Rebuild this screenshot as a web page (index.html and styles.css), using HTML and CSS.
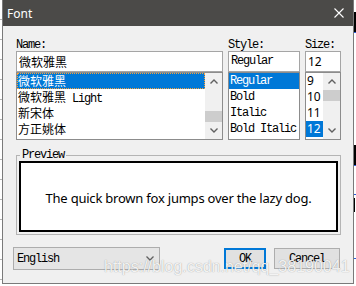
FILE: index.html
```html
<!DOCTYPE html>
<html>
<head>
<meta charset="utf-8">
<title>Font</title>
<link rel="stylesheet" href="styles.css">
</head>
<body>
  <div class="strip-left"></div>
  <div class="dialog">
    <div class="titlebar">
      <span class="title">Font</span>
      <svg class="close" width="10" height="10" viewBox="0 0 10 10"><path d="M0.5 0.5 L9.5 9.5 M9.5 0.5 L0.5 9.5" stroke="#fff" stroke-width="1.1" fill="none"/></svg>
    </div>
    <div class="content">
      <div class="pickers">
        <div class="lbl m">Name:</div>
        <div class="lbl m">Style:</div>
        <div class="lbl m">Size:</div>

        <div class="edit cjk">微软雅黑</div>
        <div class="edit m">Regular</div>
        <div class="edit sans">12</div>

        <div class="list">
          <div class="items">
            <div class="item sel focus cjk">微软雅黑</div>
            <div class="item mixed"><span class="cjk">微软雅黑</span><span class="m lite">Light</span></div>
            <div class="item cjk">新宋体</div>
            <div class="item cjk">方正姚体</div>
          </div>
          <div class="sbar">
            <div class="sbtn"><svg width="8" height="5" viewBox="0 0 8 5"><polyline points="0.5,4.5 4,1 7.5,4.5" fill="none" stroke="#606060" stroke-width="1.4"/></svg></div>
            <div class="track end"><div class="thumb"></div></div>
            <div class="sbtn"><svg width="8" height="5" viewBox="0 0 8 5"><polyline points="0.5,0.5 4,4 7.5,0.5" fill="none" stroke="#606060" stroke-width="1.4"/></svg></div>
          </div>
        </div>

        <div class="list">
          <div class="items m">
            <div class="item sel">Regular</div>
            <div class="item">Bold</div>
            <div class="item">Italic</div>
            <div class="item">Bold Italic</div>
          </div>
        </div>

        <div class="list">
          <div class="items sans">
            <div class="item">9</div>
            <div class="item">10</div>
            <div class="item">11</div>
            <div class="item sel">12</div>
          </div>
          <div class="sbar">
            <div class="sbtn"><svg width="8" height="5" viewBox="0 0 8 5"><polyline points="0.5,4.5 4,1 7.5,4.5" fill="none" stroke="#606060" stroke-width="1.4"/></svg></div>
            <div class="track"><div class="thumb"></div></div>
            <div class="sbtn"><svg width="8" height="5" viewBox="0 0 8 5"><polyline points="0.5,0.5 4,4 7.5,0.5" fill="none" stroke="#606060" stroke-width="1.4"/></svg></div>
          </div>
        </div>
      </div>

      <fieldset class="group">
        <legend class="m">Preview</legend>
        <div class="preview">The quick brown fox jumps over the lazy dog.</div>
      </fieldset>

      <div class="bottom">
        <div class="combo">
          <span class="m">English</span>
          <svg width="8" height="5" viewBox="0 0 8 5"><polyline points="0.5,0.5 4,4 7.5,0.5" fill="none" stroke="#606060" stroke-width="1.3"/></svg>
        </div>
        <div class="btn ok m">OK</div>
        <div class="btn cancel m">Cancel</div>
      </div>
    </div>
  </div>
  <div class="strip-right">
    <div class="blk b1"></div>
    <div class="bl l1"></div>
    <div class="blk b2"></div>
    <div class="bl l2"></div>
    <div class="bl l3"></div>
    <div class="blk b3"></div>
    <div class="bl l4"></div>
  </div>
  <div class="watermark">https://blog.csdn.net/qq_38190041</div>
</body>
</html>
```

FILE: styles.css
```css
* { box-sizing: border-box; }
html, body { margin: 0; padding: 0; }
body {
  position: relative;
  width: 356px;
  height: 286px;
  overflow: hidden;
  background: #fff;
  display: flex;
  align-items: flex-start;
  font-family: "Noto Sans", sans-serif;
  color: #000;
}
.strip-left {
  width: 2px;
  height: 286px;
  background: repeating-linear-gradient(to bottom, #fff 0 19px, #b4b4b4 19px 20px);
}
.strip-right {
  width: 2px;
  height: 286px;
  display: flex;
  flex-direction: column;
  background: #fff;
}
.strip-right .blk { background: #000; }
.strip-right .bl { height: 1px; background: #2b5fd9; }
.b1 { height: 20px; margin-top: 12px; }
.b2 { height: 20px; margin-top: 112px; }
.l3 { margin-top: 28px; }
.b3 { height: 14px; margin-top: 3px; width: 1px; }
.l4 { margin-top: 46px; }

.dialog {
  width: 352px;
  height: 284px;
  background: #f0f0f0;
  border: 1px solid #7a7a7a;
  border-top: 0;
  display: flex;
  flex-direction: column;
}
.titlebar {
  height: 26px;
  flex: none;
  background: #4b4a48;
  display: flex;
  align-items: center;
  justify-content: space-between;
  padding: 0 9px 0 4px;
  color: #fff;
  font-size: 12px;
}
.title { font-family: "Noto Sans", sans-serif; }

.content { padding: 13px 12px 0 13px; }

.m {
  font-family: "Liberation Mono", monospace;
  font-size: 12px;
  letter-spacing: -1.2px;
}
.cjk { font-family: "Noto Sans CJK SC", sans-serif; font-size: 12px; }
.sans { font-family: "Noto Sans", sans-serif; font-size: 12px; }

.pickers {
  display: grid;
  grid-template-columns: 207px 72px 36px;
  grid-template-rows: 12px 21px 68px;
  column-gap: 5px;
}
.lbl { line-height: 12px; }
.edit {
  background: #fff;
  border: 1px solid #a5a5a5;
  padding: 0 2px;
  line-height: 19px;
  white-space: nowrap;
  overflow: hidden;
}
.list {
  background: #fff;
  border: 1px solid #8c8c8c;
  display: flex;
  overflow: hidden;
}
.items { flex: 1; min-width: 0; }
.item {
  height: 16px;
  line-height: 16px;
  padding-left: 1px;
  white-space: nowrap;
  overflow: hidden;
}
.item.mixed {
  display: flex;
  align-items: baseline;
}
.item.mixed .cjk { line-height: 16px; }
.item.mixed .lite { line-height: 12px; margin-left: 6px; }
.item.sel { background: #0078d7; color: #fff; }
.item.focus { outline: 1px dotted #f7a23a; outline-offset: -1px; }

.sbar {
  width: 17px;
  flex: none;
  background: #f0f0f0;
  display: flex;
  flex-direction: column;
}
.sbtn {
  height: 17px;
  flex: none;
  display: flex;
  align-items: center;
  justify-content: center;
}
.track { flex: 1; display: flex; flex-direction: column; }
.track.end { justify-content: flex-end; }
.thumb { height: 11px; background: #cdcdcd; }

.group {
  margin: 9px 0 0 0;
  padding: 0 2px 2px 2px;
  border: 1px solid #b4b4b4;
  min-width: 0;
}
.group legend {
  padding: 0 2px;
  margin-left: 1px;
  line-height: 12px;
}
.preview {
  height: 71px;
  background: #fff;
  border: 2px solid #000;
  display: flex;
  align-items: center;
  justify-content: center;
  font-family: "Noto Sans", sans-serif;
  font-size: 13px;
  letter-spacing: -0.22px;
  padding-top: 3px;
  white-space: nowrap;
}

.bottom {
  display: flex;
  align-items: center;
  height: 23px;
  margin: 12px 0 0 -3px;
}
.combo {
  width: 147px;
  height: 23px;
  border: 1px solid #adadad;
  background: #e5e5e5;
  display: flex;
  align-items: center;
  justify-content: space-between;
  padding: 0 5px 0 3px;
}
.btn {
  height: 21px;
  display: flex;
  align-items: center;
  justify-content: center;
  background: #e1e1e1;
}
.ok {
  width: 42px;
  margin-left: auto;
  border: 2px solid #0078d7;
}
.cancel {
  width: 66px;
  margin-left: 8px;
  margin-right: 1px;
  border: 1px solid #adadad;
}

.watermark {
  position: absolute;
  left: 104px;
  top: 259px;
  font-family: "Liberation Sans", sans-serif;
  font-size: 16px;
  line-height: 16px;
  color: rgba(255, 255, 255, 0.9);
  text-shadow: 0 0 1px rgba(80, 80, 80, 0.6);
  white-space: nowrap;
}
```
